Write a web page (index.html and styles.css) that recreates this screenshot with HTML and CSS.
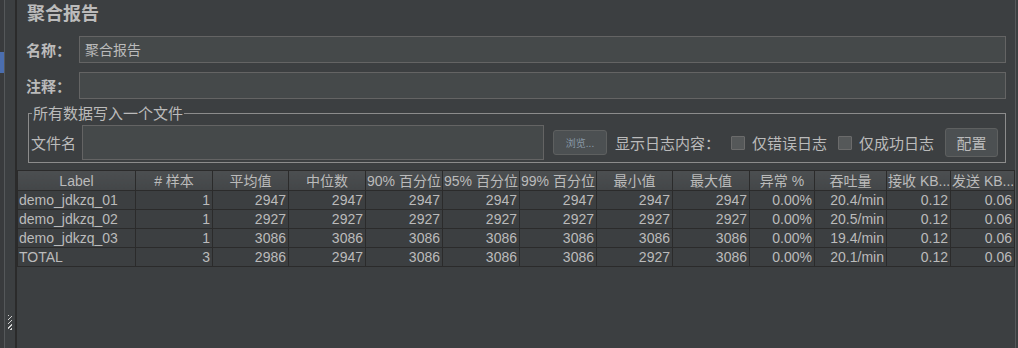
FILE: index.html
```html
<!DOCTYPE html>
<html>
<head>
    <title>聚合报告</title>
    <meta charset="UTF-8">
    <link rel="stylesheet" href="styles.css">
</head>
<body>
    <div class="side">
        <div class="side-edge"><div class="side-mark"></div></div>
        <div class="side-line"></div>
        <div class="side-pad"><div class="grip"></div></div>
    </div>

    <div class="main">
        <div class="form">
            <h1 class="title">聚合报告</h1>

            <div class="field">
                <label class="field-label">名称：</label>
                <div class="text-box">聚合报告</div>
            </div>
            <div class="field field-second">
                <label class="field-label">注释：</label>
                <div class="text-box"></div>
            </div>

            <!-- 写入文件 -->
            <fieldset class="file-set">
                <legend>所有数据写入一个文件</legend>
                <div class="file-row">
                    <label class="file-label">文件名</label>
                    <div class="text-box file-box"></div>
                    <button class="btn btn-browse">浏览...</button>
                    <span class="log-label">显示日志内容：</span>
                    <span class="check"></span>
                    <span class="check-text">仅错误日志</span>
                    <span class="check check-second"></span>
                    <span class="check-text">仅成功日志</span>
                    <button class="btn btn-config">配置</button>
                </div>
            </fieldset>
        </div>

        <div class="table-wrap">
            <table class="report">
                <colgroup>
                    <col style="width: 118px">
                    <col style="width: 77px">
                    <col style="width: 76px">
                    <col style="width: 77px">
                    <col style="width: 77px">
                    <col style="width: 77px">
                    <col style="width: 77px">
                    <col style="width: 76px">
                    <col style="width: 77px">
                    <col style="width: 65px">
                    <col style="width: 72px">
                    <col style="width: 64px">
                    <col style="width: 64px">
                </colgroup>
                <thead>
                    <tr>
                        <th>Label</th>
                        <th># 样本</th>
                        <th>平均值</th>
                        <th>中位数</th>
                        <th class="tight">90% 百分位</th>
                        <th class="tight">95% 百分位</th>
                        <th class="tight">99% 百分位</th>
                        <th>最小值</th>
                        <th>最大值</th>
                        <th>异常 %</th>
                        <th>吞吐量</th>
                        <th class="tight">接收 KB...</th>
                        <th class="tight">发送 KB...</th>
                    </tr>
                </thead>
                <tbody>
                    <tr>
                        <td class="name">demo_jdkzq_01</td>
                        <td>1</td><td>2947</td><td>2947</td><td>2947</td><td>2947</td><td>2947</td><td>2947</td><td>2947</td>
                        <td>0.00%</td><td>20.4/min</td><td>0.12</td><td>0.06</td>
                    </tr>
                    <tr>
                        <td class="name">demo_jdkzq_02</td>
                        <td>1</td><td>2927</td><td>2927</td><td>2927</td><td>2927</td><td>2927</td><td>2927</td><td>2927</td>
                        <td>0.00%</td><td>20.5/min</td><td>0.12</td><td>0.06</td>
                    </tr>
                    <tr>
                        <td class="name">demo_jdkzq_03</td>
                        <td>1</td><td>3086</td><td>3086</td><td>3086</td><td>3086</td><td>3086</td><td>3086</td><td>3086</td>
                        <td>0.00%</td><td>19.4/min</td><td>0.12</td><td>0.06</td>
                    </tr>
                    <tr>
                        <td class="name">TOTAL</td>
                        <td>3</td><td>2986</td><td>2947</td><td>3086</td><td>3086</td><td>3086</td><td>2927</td><td>3086</td>
                        <td>0.00%</td><td>20.1/min</td><td>0.12</td><td>0.06</td>
                    </tr>
                </tbody>
            </table>
        </div>
    </div>
</body>
</html>
```

FILE: styles.css
```css
body {
    margin: 0;
    height: 348px;
    display: flex;
    background-color: #3c3f41;
    color: #bbbbbb;
    font-family: "Noto Sans CJK SC", sans-serif;
    overflow: hidden;
}

/* 左侧边栏 */
.side {
    display: flex;
    flex: none;
    width: 15px;
    border-right: 2px solid #2b2b2b;
}

.side-edge {
    width: 4px;
    background-color: #393b3d;
}

.side-mark {
    margin-top: 52px;
    height: 21px;
    background-color: #4b6eaf;
}

.side-line {
    width: 1px;
    background-color: #55585a;
}

.side-pad {
    width: 10px;
    display: flex;
    justify-content: center;
}

.grip {
    margin-top: 315px;
    width: 4px;
    height: 15px;
    background-image: repeating-linear-gradient(135deg, #d0d0d0 0 1px, transparent 1px 3px);
}

.main {
    flex: 1;
    min-width: 0;
    margin-right: 2px;
    border-right: 1px solid #55585a;
    display: flex;
    flex-direction: column;
}

.form {
    padding: 0 9px 0 9px;
}

.title {
    margin: 2px 0 0 1px;
    font-size: 18px;
    line-height: 20px;
    font-weight: bold;
    color: #bbbbbb;
}

.field {
    display: flex;
    align-items: center;
    margin-top: 14px;
}

.field-second {
    margin-top: 9px;
}

.field-label {
    width: 53px;
    font-size: 15px;
    font-weight: bold;
}

.text-box {
    flex: 1;
    height: 25px;
    box-sizing: content-box;
    border: 1px solid #646464;
    background-color: #45494a;
    font-size: 14px;
    line-height: 25px;
    padding-left: 5px;
    color: #bbbbbb;
}

/* 所有数据写入一个文件 */
.file-set {
    min-width: 0;
    margin: 6px 0 0 2px;
    padding: 0 7px 2px 2px;
    border: 1px solid #8c8c8c;
}

.file-set legend {
    margin-left: 1px;
    padding: 0 1px;
    font-size: 15px;
    line-height: 16px;
}

.file-row {
    display: flex;
    align-items: center;
    margin-top: 4px;
    white-space: nowrap;
}

.file-row > * {
    flex: none;
}

.file-label {
    width: 51px;
    font-size: 15px;
}

.file-box {
    width: 455px;
    height: 33px;
}

.btn {
    font-family: "Noto Sans CJK SC", sans-serif;
    background-color: #4c5052;
    border: 1px solid #5e6060;
    border-radius: 3px;
    padding: 0;
    color: #bbbbbb;
}

.btn-browse {
    margin-left: 9px;
    width: 54px;
    height: 25px;
    font-size: 10px;
    color: #8898a6;
}

.log-label {
    margin-left: 8px;
    font-size: 15px;
}

.check {
    margin-left: 11px;
    width: 12px;
    height: 12px;
    border: 1px solid #6b6b6b;
    background-color: #555859;
    border-radius: 1px;
}

.check-second {
    margin-left: 11px;
}

.check-text {
    margin-left: 7px;
    font-size: 15px;
}

.btn-config {
    margin-left: 11px;
    width: 53px;
    height: 29px;
    font-size: 15px;
}

/* 结果表格 */
.table-wrap {
    margin-top: 7px;
    border-top: 1px solid #2b2b2b;
}

.report {
    table-layout: fixed;
    width: 997px;
    border-collapse: collapse;
    font-family: "Liberation Sans", "Noto Sans CJK SC", sans-serif;
    font-size: 14px;
    color: #bbbbbb;
}

.report th {
    height: 19px;
    padding: 0;
    font-weight: normal;
    text-align: center;
    white-space: nowrap;
    overflow: hidden;
    background: linear-gradient(#4c4f51, #434648);
    border: 1px solid #2b2b2b;
    border-top: none;
    line-height: 18px;
}

.report th.tight {
    text-align: left;
    padding-left: 1px;
}

.report td {
    height: 18px;
    padding: 0 2px 0 2px;
    text-align: right;
    white-space: nowrap;
    overflow: hidden;
    border: 1px solid #2b2b2b;
    line-height: 18px;
}

.report td.name {
    text-align: left;
    padding-left: 1px;
}
```
